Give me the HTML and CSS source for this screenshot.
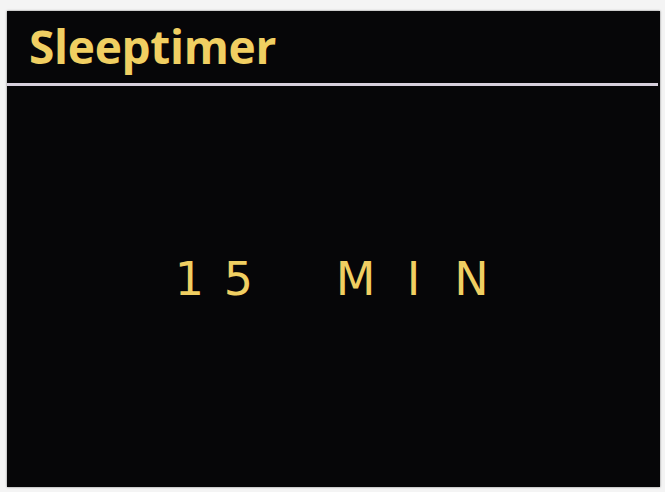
FILE: index.html
```html
<!DOCTYPE html>
<html>
<head>
<meta charset="utf-8">
<link rel="stylesheet" href="styles.css">
</head>
<body>
<div class="screen">
  <div class="header">
    <h1 class="title">Sleeptimer</h1>
  </div>
  <div class="rule"></div>
  <div class="content">
    <div class="value"><span class="num">1</span><span class="num">5</span><span class="unit">M</span><span class="unit">I</span><span class="unit">N</span></div>
  </div>
</div>
</body>
</html>
```
FILE: styles.css
```css
html, body {
  margin: 0;
  padding: 0;
  background: #f4f4f4;
  width: 665px;
  height: 492px;
  overflow: hidden;
}
body {
  padding: 11px 5px 5px 7px;
  box-sizing: border-box;
  font-family: "DejaVu Sans", sans-serif;
}
.screen {
  width: 653px;
  height: 476px;
  background: #060608;
  display: flex;
  flex-direction: column;
  box-shadow: 0 0 2px rgba(0,0,0,0.5);
}
.header {
  height: 72px;
  display: flex;
  align-items: center;
  padding-left: 22px;
}
.title {
  margin: 0;
  font-family: "Open Sans", "DejaVu Sans", sans-serif;
  font-size: 46px;
  font-weight: bold;
  color: #f0cf62;
  letter-spacing: -0.3px;
  line-height: 1;
  padding-bottom: 2px;
}
.rule {
  height: 3px;
  background: #d6cfdc;
  margin-right: 2px;
}
.content {
  flex: 1;
  display: flex;
  justify-content: center;
  align-items: center;
  padding-bottom: 16px;
}
.value {
  display: flex;
  align-items: baseline;
  color: #f0cf62;
  font-size: 46px;
  line-height: 1;
  padding-right: 8px;
}
.num {
  width: 52px;
  text-align: center;
}
.num:first-child { margin-left: 8px; width: 46px; }
.num + .num { margin-right: 62px; }
.unit {
  width: 58px;
  text-align: center;
}
```
